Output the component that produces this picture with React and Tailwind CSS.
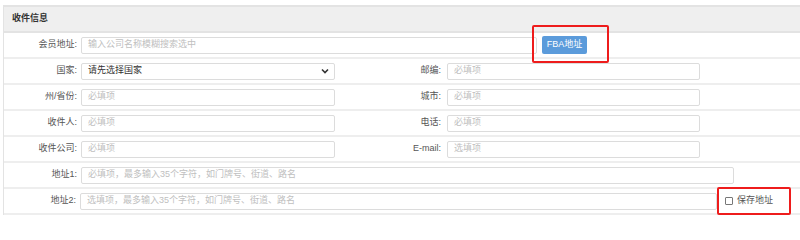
import React from "react";

const font = { fontFamily: '"Liberation Sans","Noto Sans CJK SC",sans-serif' };

function Label({ children, w = "w-[77px]", pr = "pr-[4px]" }) {
  return (
    <div className={`${w} ${pr} shrink-0 text-right text-[9px] text-[#555]`}>{children}</div>
  );
}

function Input({ w, placeholder, ml = "ml-0" }) {
  return (
    <div
      className={`${w} ${ml} h-[17px] shrink-0 rounded-[2px] border border-[#dcdcdc] bg-white flex items-center pl-[6px] text-[9px] text-[#c0c0c0]`}
    >
      {placeholder}
    </div>
  );
}

function Row({ children }) {
  return (
    <div className="relative h-[26px] flex items-center border-b-2 border-[#eeeeee]">{children}</div>
  );
}

export default function App() {
  return (
    <div className="w-[800px] h-[224px] bg-white overflow-hidden" style={font}>
      <div className="ml-[3px] mt-[5px] w-[797px] border-l border-t-2 border-[#e3e3e3]">
        <div className="h-[26px] flex items-center bg-[#efefef] border-b-2 border-[#e3e3e3] pl-[8px] text-[9px] font-bold text-[#333]">
          收件信息
        </div>
        <Row>
          <Label>会员地址:</Label>
          <Input w="w-[456px]" placeholder="输入公司名称模糊搜索选中" />
          <div className="relative ml-[5px]">
            <div className="h-[18px] w-[45px] rounded-[2px] bg-[#5b9bdb] text-white text-[9px] flex items-center justify-center">
              FBA地址
            </div>
            <div className="absolute left-[-10px] top-[-11px] w-[77px] h-[38px] border-2 border-[#ee1c1c] rounded-[2px]" />
          </div>
        </Row>
        <Row>
          <Label>国家:</Label>
          <div className="w-[254px] h-[17px] shrink-0 rounded-[2px] border border-[#dcdcdc] flex items-center justify-between pl-[6px] pr-[5px] text-[9px] text-[#333]">
            <span>请先选择国家</span>
            <svg width="8" height="6" viewBox="0 0 8 6">
              <path d="M1 1.5 L4 4.5 L7 1.5" fill="none" stroke="#333" strokeWidth="1.6" />
            </svg>
          </div>
          <Label w="w-[112px]" pr="pr-[6px]">邮编:</Label>
          <Input w="w-[253px]" placeholder="必填项" />
        </Row>
        <Row>
          <Label>州/省份:</Label>
          <Input w="w-[254px]" placeholder="必填项" />
          <Label w="w-[112px]" pr="pr-[6px]">城市:</Label>
          <Input w="w-[253px]" placeholder="必填项" />
        </Row>
        <Row>
          <Label>收件人:</Label>
          <Input w="w-[254px]" placeholder="必填项" />
          <Label w="w-[112px]" pr="pr-[6px]">电话:</Label>
          <Input w="w-[253px]" placeholder="必填项" />
        </Row>
        <Row>
          <Label>收件公司:</Label>
          <Input w="w-[254px]" placeholder="必填项" />
          <Label w="w-[112px]" pr="pr-[6px]">E-mail:</Label>
          <Input w="w-[253px]" placeholder="选填项" />
        </Row>
        <Row>
          <Label>地址1:</Label>
          <Input w="w-[653px]" placeholder="必填项，最多输入35个字符，如门牌号、街道、路名" />
        </Row>
        <Row>
          <Label w="w-[76px]">地址2:</Label>
          <Input w="w-[637px]" placeholder="选填项，最多输入35个字符，如门牌号、街道、路名" />
          <div className="relative ml-[8px] flex items-center gap-[4px] text-[9px] text-[#555]">
            <div className="w-[8px] h-[8px] border border-[#777] rounded-[1px] bg-white" />
            <span>保存地址</span>
            <div className="absolute left-[-8px] top-[-7px] w-[74px] h-[28px] border-2 border-[#ee1c1c] rounded-[2px]" />
          </div>
        </Row>
      </div>
    </div>
  );
}
